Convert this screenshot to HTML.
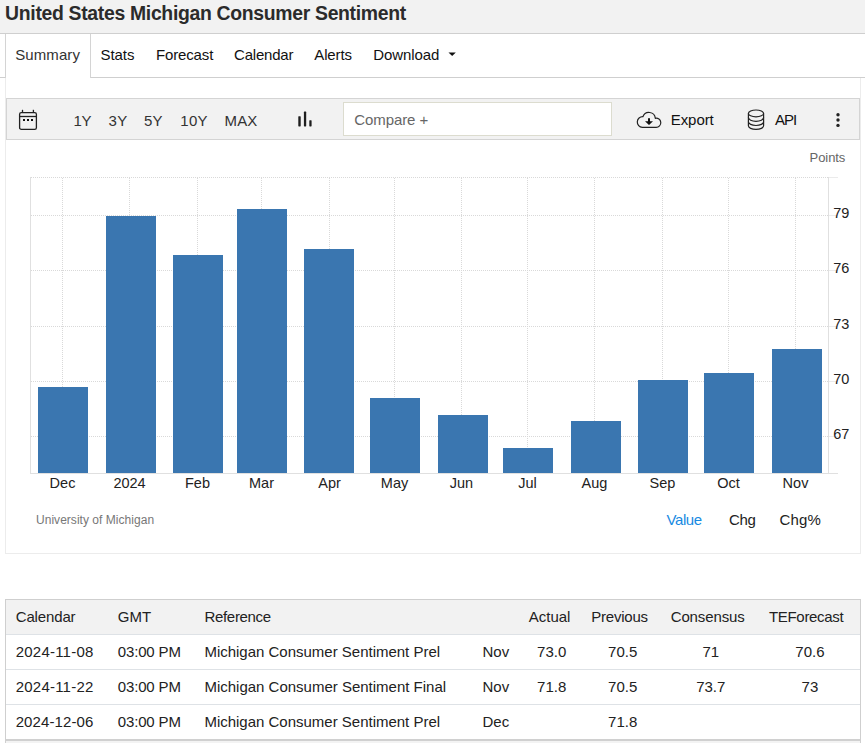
<!DOCTYPE html>
<html><head><meta charset="utf-8"><title>United States Michigan Consumer Sentiment</title>
<style>
html,body{margin:0;padding:0;background:#fff;width:865px;height:743px;overflow:hidden;position:relative}
.t{position:absolute;white-space:nowrap;font-family:"Liberation Sans",sans-serif}
.r{position:absolute}
</style></head><body>
<div class="r" style="left:0px;top:0px;width:865px;height:33px;background:#f2f2f2;"></div>
<div class="r" style="left:0px;top:33px;width:865px;height:1px;background:#cfcfcf;"></div>
<span class="t" style="left:5.10px;top:4.00px;font-size:19.4px;line-height:19.4px;font-weight:bold;letter-spacing:-0.315px;color:#2b2b2b">United States Michigan Consumer Sentiment</span>
<div class="r" style="left:0px;top:77px;width:5px;height:1px;background:#cfcfcf;"></div>
<div class="r" style="left:91px;top:77px;width:774px;height:1px;background:#cfcfcf;"></div>
<div class="r" style="left:5px;top:34px;width:1px;height:44px;background:#d4d4d4;"></div>
<div class="r" style="left:90px;top:34px;width:1px;height:44px;background:#d4d4d4;"></div>
<span class="t" style="left:15.20px;top:47.00px;font-size:15px;line-height:15px;letter-spacing:0.100px;color:#333">Summary</span>
<span class="t" style="left:100.50px;top:47.00px;font-size:15px;line-height:15px;letter-spacing:-0.050px;color:#111">Stats</span>
<span class="t" style="left:156.00px;top:47.00px;font-size:15px;line-height:15px;letter-spacing:-0.150px;color:#111">Forecast</span>
<span class="t" style="left:234.00px;top:47.00px;font-size:15px;line-height:15px;letter-spacing:-0.207px;color:#111">Calendar</span>
<span class="t" style="left:314.30px;top:47.00px;font-size:15px;line-height:15px;letter-spacing:-0.130px;color:#111">Alerts</span>
<span class="t" style="left:373.20px;top:47.00px;font-size:15px;line-height:15px;letter-spacing:-0.071px;color:#111">Download</span>
<svg class="r" style="left:448px;top:51px" width="9" height="7"><path d="M0.5,1.5 L7.8,1.5 L4.15,5.1 Z" fill="#111"/></svg>
<div class="r" style="left:5px;top:78px;width:1px;height:476px;background:#ececec;"></div>
<div class="r" style="left:860px;top:78px;width:1px;height:476px;background:#ececec;"></div>
<div class="r" style="left:5px;top:553px;width:856px;height:1px;background:#ececec;"></div>
<div class="r" style="left:6px;top:98px;width:854px;height:42px;background:#f2f2f2;box-sizing:border-box;border:1px solid #d4d4d4;"></div>
<svg class="r" style="left:17px;top:108px" width="24" height="24" viewBox="0 0 24 24">
<rect x="2.6" y="4.6" width="16.8" height="16.8" rx="1.7" fill="none" stroke="#222" stroke-width="1.3"/>
<line x1="2.6" y1="8.5" x2="19.4" y2="8.5" stroke="#222" stroke-width="1.3"/>
<line x1="5.5" y1="1.8" x2="5.5" y2="4.6" stroke="#222" stroke-width="1.3"/>
<line x1="16.4" y1="1.8" x2="16.4" y2="4.6" stroke="#222" stroke-width="1.3"/>
<rect x="6" y="11" width="2" height="2" fill="#111"/><rect x="10" y="11" width="2" height="2" fill="#111"/><rect x="14" y="11" width="2" height="2" fill="#111"/>
</svg>
<span class="t" style="left:73.60px;top:113.00px;font-size:15px;line-height:15px;letter-spacing:-0.350px;color:#333">1Y</span>
<span class="t" style="left:108.50px;top:113.00px;font-size:15px;line-height:15px;letter-spacing:0.450px;color:#333">3Y</span>
<span class="t" style="left:143.90px;top:113.00px;font-size:15px;line-height:15px;letter-spacing:0.350px;color:#333">5Y</span>
<span class="t" style="left:180.20px;top:113.00px;font-size:15px;line-height:15px;letter-spacing:0.350px;color:#333">10Y</span>
<span class="t" style="left:224.60px;top:113.00px;font-size:15px;line-height:15px;letter-spacing:0.100px;color:#333">MAX</span>
<svg class="r" style="left:290px;top:105px" width="30" height="25"><rect x="8.3" y="11.2" width="2.4" height="10.2" rx="0.6" fill="#1e1e1e"/><rect x="13.9" y="6.6" width="2.3" height="14.8" rx="0.6" fill="#1e1e1e"/><rect x="19.3" y="15.2" width="2.3" height="6.2" rx="0.6" fill="#1e1e1e"/></svg>
<div class="r" style="left:343px;top:102px;width:269px;height:34px;background:#fff;box-sizing:border-box;border:1px solid #dcdccf;"></div>
<span class="t" style="left:354.30px;top:112.00px;font-size:15px;line-height:15px;letter-spacing:-0.087px;color:#666">Compare +</span>
<svg class="r" style="left:630px;top:105px" width="40" height="30" viewBox="630 105 40 30">
<path d="M642.3,127.3 A5.2,5.2 0 1 1 642.9,116.7 A6.4,6.4 0 0 1 655.3,118.3 A4.55,4.55 0 1 1 656.1,127.3 Z" fill="none" stroke="#222" stroke-width="1.2" stroke-linejoin="round"/>
<path d="M648,118.2 L650,118.2 L650,121.3 L653,121.3 L649,124.9 L645,121.3 L648,121.3 Z" fill="#111"/>
</svg>
<span class="t" style="left:670.70px;top:112.00px;font-size:15px;line-height:15px;letter-spacing:-0.050px;color:#111">Export</span>
<svg class="r" style="left:746px;top:107px" width="20" height="25" viewBox="0 0 20 25">
<ellipse cx="10" cy="6.4" rx="7.6" ry="3.4" fill="none" stroke="#222" stroke-width="1.2"/>
<path d="M2.4,6.4 L2.4,18.8 C2.4,20.8 5.8,22.4 10,22.4 C14.2,22.4 17.6,20.8 17.6,18.8 L17.6,6.4" fill="none" stroke="#222" stroke-width="1.2"/>
<path d="M2.4,10.6 C2.4,12.6 5.8,14.3 10,14.3 C14.2,14.3 17.6,12.6 17.6,10.6" fill="none" stroke="#222" stroke-width="1.2"/>
<path d="M2.4,14.8 C2.4,16.8 5.8,18.5 10,18.5 C14.2,18.5 17.6,16.8 17.6,14.8" fill="none" stroke="#222" stroke-width="1.2"/>
</svg>
<span class="t" style="left:775.00px;top:112.00px;font-size:15px;line-height:15px;letter-spacing:-1.000px;color:#111">API</span>
<svg class="r" style="left:833px;top:110px" width="10" height="20"><circle cx="5" cy="4.8" r="1.7" fill="#222"/><circle cx="5" cy="10" r="1.7" fill="#222"/><circle cx="5" cy="15.4" r="1.7" fill="#222"/></svg>
<span class="t" style="left:809.60px;top:151.00px;font-size:13px;line-height:13px;letter-spacing:-0.070px;color:#666">Points</span>
<svg class="r" style="left:0;top:0" width="865" height="743" shape-rendering="crispEdges"><line x1="31" y1="177.5" x2="828" y2="177.5" stroke="#d9d9d9" stroke-dasharray="1,1"/><rect x="829" y="177" width="9" height="1" fill="#ebebeb"/><line x1="31" y1="215.5" x2="828" y2="215.5" stroke="#d9d9d9" stroke-dasharray="1,1"/><rect x="829" y="215" width="9" height="1" fill="#ebebeb"/><line x1="31" y1="270.5" x2="828" y2="270.5" stroke="#d9d9d9" stroke-dasharray="1,1"/><rect x="829" y="270" width="9" height="1" fill="#ebebeb"/><line x1="31" y1="326.5" x2="828" y2="326.5" stroke="#d9d9d9" stroke-dasharray="1,1"/><rect x="829" y="326" width="9" height="1" fill="#ebebeb"/><line x1="31" y1="381.5" x2="828" y2="381.5" stroke="#d9d9d9" stroke-dasharray="1,1"/><rect x="829" y="381" width="9" height="1" fill="#ebebeb"/><line x1="31" y1="436.5" x2="828" y2="436.5" stroke="#d9d9d9" stroke-dasharray="1,1"/><rect x="829" y="436" width="9" height="1" fill="#ebebeb"/><line x1="62.5" y1="178" x2="62.5" y2="473" stroke="#d9d9d9" stroke-dasharray="1,1"/><line x1="129.5" y1="178" x2="129.5" y2="473" stroke="#d9d9d9" stroke-dasharray="1,1"/><line x1="197.5" y1="178" x2="197.5" y2="473" stroke="#d9d9d9" stroke-dasharray="1,1"/><line x1="261.5" y1="178" x2="261.5" y2="473" stroke="#d9d9d9" stroke-dasharray="1,1"/><line x1="329.5" y1="178" x2="329.5" y2="473" stroke="#d9d9d9" stroke-dasharray="1,1"/><line x1="394.5" y1="178" x2="394.5" y2="473" stroke="#d9d9d9" stroke-dasharray="1,1"/><line x1="461.5" y1="178" x2="461.5" y2="473" stroke="#d9d9d9" stroke-dasharray="1,1"/><line x1="527.5" y1="178" x2="527.5" y2="473" stroke="#d9d9d9" stroke-dasharray="1,1"/><line x1="594.5" y1="178" x2="594.5" y2="473" stroke="#d9d9d9" stroke-dasharray="1,1"/><line x1="662.5" y1="178" x2="662.5" y2="473" stroke="#d9d9d9" stroke-dasharray="1,1"/><line x1="728.5" y1="178" x2="728.5" y2="473" stroke="#d9d9d9" stroke-dasharray="1,1"/><line x1="795.5" y1="178" x2="795.5" y2="473" stroke="#d9d9d9" stroke-dasharray="1,1"/><rect x="30" y="177" width="1" height="296" fill="#e0e0e0"/><rect x="828" y="177" width="1" height="296" fill="#e0e0e0"/><rect x="30" y="473" width="808" height="1" fill="#e0e0e0"/><rect x="38" y="387" width="50" height="86" fill="#3a76b0"/><rect x="106" y="216" width="50" height="257" fill="#3a76b0"/><rect x="173" y="255" width="50" height="218" fill="#3a76b0"/><rect x="237" y="209" width="50" height="264" fill="#3a76b0"/><rect x="304" y="249" width="50" height="224" fill="#3a76b0"/><rect x="370" y="398" width="50" height="75" fill="#3a76b0"/><rect x="438" y="415" width="50" height="58" fill="#3a76b0"/><rect x="503" y="448" width="50" height="25" fill="#3a76b0"/><rect x="571" y="421" width="50" height="52" fill="#3a76b0"/><rect x="638" y="380" width="50" height="93" fill="#3a76b0"/><rect x="704" y="373" width="50" height="100" fill="#3a76b0"/><rect x="772" y="349" width="50" height="124" fill="#3a76b0"/></svg>
<span class="t" style="left:833.30px;top:206.00px;font-size:14.5px;line-height:14.5px;color:#222">79</span>
<span class="t" style="left:833.30px;top:261.00px;font-size:14.5px;line-height:14.5px;color:#222">76</span>
<span class="t" style="left:833.30px;top:317.00px;font-size:14.5px;line-height:14.5px;color:#222">73</span>
<span class="t" style="left:833.30px;top:372.00px;font-size:14.5px;line-height:14.5px;color:#222">70</span>
<span class="t" style="left:833.30px;top:427.00px;font-size:14.5px;line-height:14.5px;color:#222">67</span>
<span class="t" style="left:49.60px;top:476.00px;font-size:14.5px;line-height:14.5px;color:#222">Dec</span>
<span class="t" style="left:113.38px;top:476.00px;font-size:14.5px;line-height:14.5px;color:#222">2024</span>
<span class="t" style="left:185.00px;top:476.00px;font-size:14.5px;line-height:14.5px;color:#222">Feb</span>
<span class="t" style="left:249.03px;top:476.00px;font-size:14.5px;line-height:14.5px;color:#222">Mar</span>
<span class="t" style="left:318.23px;top:476.00px;font-size:14.5px;line-height:14.5px;color:#222">Apr</span>
<span class="t" style="left:380.80px;top:476.00px;font-size:14.5px;line-height:14.5px;color:#222">May</span>
<span class="t" style="left:449.80px;top:476.00px;font-size:14.5px;line-height:14.5px;color:#222">Jun</span>
<span class="t" style="left:518.23px;top:476.00px;font-size:14.5px;line-height:14.5px;color:#222">Jul</span>
<span class="t" style="left:581.60px;top:476.00px;font-size:14.5px;line-height:14.5px;color:#222">Aug</span>
<span class="t" style="left:649.60px;top:476.00px;font-size:14.5px;line-height:14.5px;color:#222">Sep</span>
<span class="t" style="left:717.23px;top:476.00px;font-size:14.5px;line-height:14.5px;color:#222">Oct</span>
<span class="t" style="left:782.60px;top:476.00px;font-size:14.5px;line-height:14.5px;color:#222">Nov</span>
<span class="t" style="left:36.00px;top:514.00px;font-size:12px;line-height:12px;letter-spacing:0.033px;color:#777">University of Michigan</span>
<span class="t" style="left:666.40px;top:512.00px;font-size:15px;line-height:15px;letter-spacing:-0.363px;color:#178ae2">Value</span>
<span class="t" style="left:728.90px;top:512.00px;font-size:15px;line-height:15px;letter-spacing:-0.250px;color:#222">Chg</span>
<span class="t" style="left:779.40px;top:512.00px;font-size:15px;line-height:15px;letter-spacing:0.183px;color:#222">Chg%</span>
<div class="r" style="left:5px;top:599px;width:856px;height:144px;background:#fff;box-sizing:border-box;border:1px solid #cfcfcf;border-bottom:none;"></div>
<div class="r" style="left:6px;top:600px;width:854px;height:34px;background:#f2f2f2;"></div>
<div class="r" style="left:6px;top:634px;width:854px;height:1px;background:#dee2e6;"></div>
<div class="r" style="left:6px;top:669px;width:854px;height:1px;background:#dee2e6;"></div>
<div class="r" style="left:6px;top:704px;width:854px;height:1px;background:#dee2e6;"></div>
<div class="r" style="left:6px;top:739px;width:854px;height:2px;background:#d0d0d0;"></div>
<div class="r" style="left:6px;top:741px;width:854px;height:2px;background:#f3f3f3;"></div>
<span class="t" style="left:15.70px;top:609.00px;font-size:15px;line-height:15px;letter-spacing:-0.136px;color:#222">Calendar</span>
<span class="t" style="left:117.80px;top:609.00px;font-size:15px;line-height:15px;color:#222">GMT</span>
<span class="t" style="left:204.50px;top:609.00px;font-size:15px;line-height:15px;letter-spacing:-0.325px;color:#222">Reference</span>
<span class="t" style="left:528.80px;top:609.00px;font-size:15px;line-height:15px;letter-spacing:-0.020px;color:#222">Actual</span>
<span class="t" style="left:591.20px;top:609.00px;font-size:15px;line-height:15px;letter-spacing:-0.207px;color:#222">Previous</span>
<span class="t" style="left:670.70px;top:609.00px;font-size:15px;line-height:15px;letter-spacing:-0.119px;color:#222">Consensus</span>
<span class="t" style="left:769.00px;top:609.00px;font-size:15px;line-height:15px;letter-spacing:-0.322px;color:#222">TEForecast</span>
<span class="t" style="left:15.70px;top:644.00px;font-size:15px;line-height:15px;letter-spacing:0.222px;color:#222">2024-11-08</span>
<span class="t" style="left:117.80px;top:644.00px;font-size:15px;line-height:15px;letter-spacing:-0.157px;color:#222">03:00 PM</span>
<span class="t" style="left:204.40px;top:644.00px;font-size:15px;line-height:15px;letter-spacing:-0.008px;color:#222">Michigan Consumer Sentiment Prel</span>
<span class="t" style="left:482.50px;top:644.00px;font-size:15px;line-height:15px;color:#222">Nov</span>
<span class="t" style="left:537.10px;top:644.00px;font-size:15px;line-height:15px;color:#222">73.0</span>
<span class="t" style="left:608.10px;top:644.00px;font-size:15px;line-height:15px;color:#222">70.5</span>
<span class="t" style="left:702.45px;top:644.00px;font-size:15px;line-height:15px;color:#222">71</span>
<span class="t" style="left:795.30px;top:644.00px;font-size:15px;line-height:15px;color:#222">70.6</span>
<span class="t" style="left:15.70px;top:679.00px;font-size:15px;line-height:15px;letter-spacing:0.222px;color:#222">2024-11-22</span>
<span class="t" style="left:117.80px;top:679.00px;font-size:15px;line-height:15px;letter-spacing:-0.157px;color:#222">03:00 PM</span>
<span class="t" style="left:204.40px;top:679.00px;font-size:15px;line-height:15px;letter-spacing:-0.002px;color:#222">Michigan Consumer Sentiment Final</span>
<span class="t" style="left:482.50px;top:679.00px;font-size:15px;line-height:15px;color:#222">Nov</span>
<span class="t" style="left:537.10px;top:679.00px;font-size:15px;line-height:15px;color:#222">71.8</span>
<span class="t" style="left:608.10px;top:679.00px;font-size:15px;line-height:15px;color:#222">70.5</span>
<span class="t" style="left:696.20px;top:679.00px;font-size:15px;line-height:15px;color:#222">73.7</span>
<span class="t" style="left:801.55px;top:679.00px;font-size:15px;line-height:15px;color:#222">73</span>
<span class="t" style="left:15.70px;top:714.00px;font-size:15px;line-height:15px;letter-spacing:0.094px;color:#222">2024-12-06</span>
<span class="t" style="left:117.80px;top:714.00px;font-size:15px;line-height:15px;letter-spacing:-0.157px;color:#222">03:00 PM</span>
<span class="t" style="left:204.40px;top:714.00px;font-size:15px;line-height:15px;letter-spacing:-0.008px;color:#222">Michigan Consumer Sentiment Prel</span>
<span class="t" style="left:482.50px;top:714.00px;font-size:15px;line-height:15px;color:#222">Dec</span>
<span class="t" style="left:608.10px;top:714.00px;font-size:15px;line-height:15px;color:#222">71.8</span>
</body></html>
